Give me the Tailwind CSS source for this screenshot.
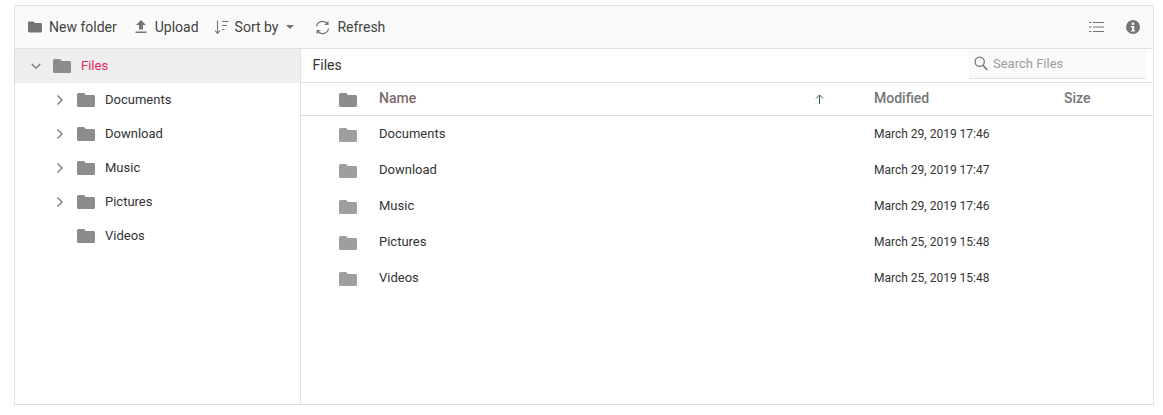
<!DOCTYPE html>
<html>
<head>
<meta charset="utf-8">
<script src="https://cdn.jsdelivr.net/npm/@tailwindcss/browser@4"></script>
</head>
<body class="bg-white font-['Roboto',sans-serif] overflow-hidden">
<svg width="0" height="0" class="absolute">
  <defs>
    <symbol id="folder" viewBox="0 0 18 14"><path d="M1.500 0H7l2 2h7.500A1.500 1.500 0 0 1 18 3.500V12.500A1.500 1.500 0 0 1 16.500 14H1.500A1.500 1.500 0 0 1 0 12.500V1.500A1.500 1.500 0 0 1 1.500 0Z" fill="currentColor"/></symbol>
    <symbol id="chev" viewBox="0 0 8 12"><path d="M1.500 1.500L6 6L1.500 10.500" fill="none" stroke="currentColor" stroke-width="1.300"/></symbol>
  </defs>
</svg>
<div class="ml-[14px] mt-[5px] w-[1140px] h-[400px] border border-[#e0e0e0] flex flex-col">
  <div class="h-[43px] shrink-0 bg-[#fafafa] border-b border-[#e0e0e0] flex items-center text-[14px] text-[#424242] pl-[13px] pr-[13px]">
    <svg class="w-[14px] h-[12px] text-[#757575] mr-[7px]"><use href="#folder"/></svg>
    <span class="mr-[18px]">New folder</span>
    <svg class="w-[12px] h-[14px] text-[#757575] mr-[8px]" viewBox="0 0 12 14"><path d="M6 0L11 5H8V9.500H4V5H1Z M0.500 11.500H11.500V13H0.500Z" fill="currentColor"/></svg>
    <span class="mr-[15px]">Upload</span>
    <svg class="w-[15px] h-[15px] text-[#757575] mr-[6px]" viewBox="0 0 15 15"><path d="M3.500 0.500V13M1 10.500L3.500 13.500L6 10.500M8 1.500H14.500M8 5.500H13M8 9.500H10.500" fill="none" stroke="currentColor" stroke-width="1.100"/></svg>
    <span class="mr-[8px]">Sort by</span>
    <span class="w-0 h-0 border-x-[4px] border-x-transparent border-t-[4px] border-t-[#757575] mr-[21px]"></span>
    <svg class="w-[15px] h-[15px] text-[#757575] mr-[7px]" viewBox="0 0 15 15"><path d="M1.500 6.500A6 6 0 0 1 12 3.500M13.500 8.500A6 6 0 0 1 3 11.500" fill="none" stroke="currentColor" stroke-width="1.200"/><path d="M13.500 0.800V5H9.300ZM1.500 14.200V10H5.700Z" fill="currentColor"/></svg>
    <span>Refresh</span>
    <svg class="w-[15px] h-[12px] text-[#757575] ml-auto mr-[22px]" viewBox="0 0 15 12"><path d="M4 1.500H15M4 6H15M4 10.500H15M0 1.500H2.500M0 6H2.500M0 10.500H2.500" fill="none" stroke="currentColor" stroke-width="1"/></svg>
    <svg class="w-[14px] h-[14px] text-[#757575]" viewBox="0 0 14 14"><circle cx="7" cy="7" r="7" fill="currentColor"/><rect x="5.800" y="2.600" width="2.400" height="2.300" fill="#fafafa"/><path d="M5 6H8.200V10.200H9.200V11.500H5V10.200H6V7.300H5Z" fill="#fafafa"/></svg>
  </div>
  <div class="flex flex-1 min-h-0">
    <div class="w-[286px] shrink-0 border-r border-[#e0e0e0] text-[13px] text-[#333333]">
      <div class="h-[34px] bg-[#eeeeee] flex items-center pl-[16px]">
        <svg class="w-[10px] h-[7px] text-[#757575] mr-[12px]" viewBox="0 0 10 7"><path d="M0.800 1L5 5.200L9.200 1" fill="none" stroke="currentColor" stroke-width="1.300"/></svg>
        <svg class="w-[18px] h-[14px] text-[#8c8c8c] mr-[10px]"><use href="#folder"/></svg>
        <span class="text-[#e91e63]">Files</span>
      </div>
      <div class="h-[34px] flex items-center pl-[41px]"><svg class="w-[8px] h-[12px] text-[#757575] mr-[13px]"><use href="#chev"/></svg><svg class="w-[18px] h-[14px] text-[#8c8c8c] mr-[10px]"><use href="#folder"/></svg><span>Documents</span></div>
      <div class="h-[34px] flex items-center pl-[41px]"><svg class="w-[8px] h-[12px] text-[#757575] mr-[13px]"><use href="#chev"/></svg><svg class="w-[18px] h-[14px] text-[#8c8c8c] mr-[10px]"><use href="#folder"/></svg><span>Download</span></div>
      <div class="h-[34px] flex items-center pl-[41px]"><svg class="w-[8px] h-[12px] text-[#757575] mr-[13px]"><use href="#chev"/></svg><svg class="w-[18px] h-[14px] text-[#8c8c8c] mr-[10px]"><use href="#folder"/></svg><span>Music</span></div>
      <div class="h-[34px] flex items-center pl-[41px]"><svg class="w-[8px] h-[12px] text-[#757575] mr-[13px]"><use href="#chev"/></svg><svg class="w-[18px] h-[14px] text-[#8c8c8c] mr-[10px]"><use href="#folder"/></svg><span>Pictures</span></div>
      <div class="h-[34px] flex items-center pl-[62px]"><svg class="w-[18px] h-[14px] text-[#8c8c8c] mr-[10px]"><use href="#folder"/></svg><span>Videos</span></div>
    </div>
    <div class="flex-1 min-w-0 flex flex-col">
      <div class="h-[34px] shrink-0 border-b border-[#e0e0e0] flex items-center pl-[11.5px] text-[14px] text-[#333333]">
        <span>Files</span>
        <div class="ml-auto mr-[7px] self-start mt-[1px] w-[177px] h-[29px] bg-[#fafafa] border-b border-[#e0e0e0] flex items-center pl-[5px] pb-[1px] text-[13px] text-[#9e9e9e]">
          <svg class="w-[14px] h-[15px] text-[#757575] mr-[5px]" viewBox="0 0 14 15"><circle cx="5.700" cy="5.700" r="4.600" fill="none" stroke="currentColor" stroke-width="1.300"/><path d="M9 9.200L13.300 14" stroke="currentColor" stroke-width="1.600"/></svg>
          <span>Search Files</span>
        </div>
      </div>
      <div class="h-[33px] shrink-0 border-b border-[#e0e0e0] flex items-center text-[14px] font-medium text-[#757575]">
        <svg class="w-[18px] h-[14px] text-[#8c8c8c] ml-[38px] mr-[22px] mt-[2px]"><use href="#folder"/></svg>
        <span class="w-[436px] text-[#7b6a6a] mb-[2px]">Name</span>
        <svg class="w-[9px] h-[10px] text-[#3f5a50] mr-[50px]" viewBox="0 0 9 10"><path d="M4.500 10V1M1 4.500L4.500 1L8 4.500" fill="none" stroke="currentColor" stroke-width="1"/></svg>
        <span class="w-[190px] mb-[2px]">Modified</span>
        <span class="mb-[2px]">Size</span>
      </div>
      <div class="h-[36px] flex items-center text-[13px] text-[#333333]"><svg class="w-[18px] h-[14px] text-[#9e9e9e] ml-[38px] mr-[22px] mt-[2px]"><use href="#folder"/></svg><span class="w-[495px]">Documents</span><span class="text-[12px]">March 29, 2019 17:46</span></div>
      <div class="h-[36px] flex items-center text-[13px] text-[#333333]"><svg class="w-[18px] h-[14px] text-[#9e9e9e] ml-[38px] mr-[22px] mt-[2px]"><use href="#folder"/></svg><span class="w-[495px]">Download</span><span class="text-[12px]">March 29, 2019 17:47</span></div>
      <div class="h-[36px] flex items-center text-[13px] text-[#333333]"><svg class="w-[18px] h-[14px] text-[#9e9e9e] ml-[38px] mr-[22px] mt-[2px]"><use href="#folder"/></svg><span class="w-[495px]">Music</span><span class="text-[12px]">March 29, 2019 17:46</span></div>
      <div class="h-[36px] flex items-center text-[13px] text-[#333333]"><svg class="w-[18px] h-[14px] text-[#9e9e9e] ml-[38px] mr-[22px] mt-[2px]"><use href="#folder"/></svg><span class="w-[495px]">Pictures</span><span class="text-[12px]">March 25, 2019 15:48</span></div>
      <div class="h-[36px] flex items-center text-[13px] text-[#333333]"><svg class="w-[18px] h-[14px] text-[#9e9e9e] ml-[38px] mr-[22px] mt-[2px]"><use href="#folder"/></svg><span class="w-[495px]">Videos</span><span class="text-[12px]">March 25, 2019 15:48</span></div>
    </div>
  </div>
</div>
</body>
</html>
